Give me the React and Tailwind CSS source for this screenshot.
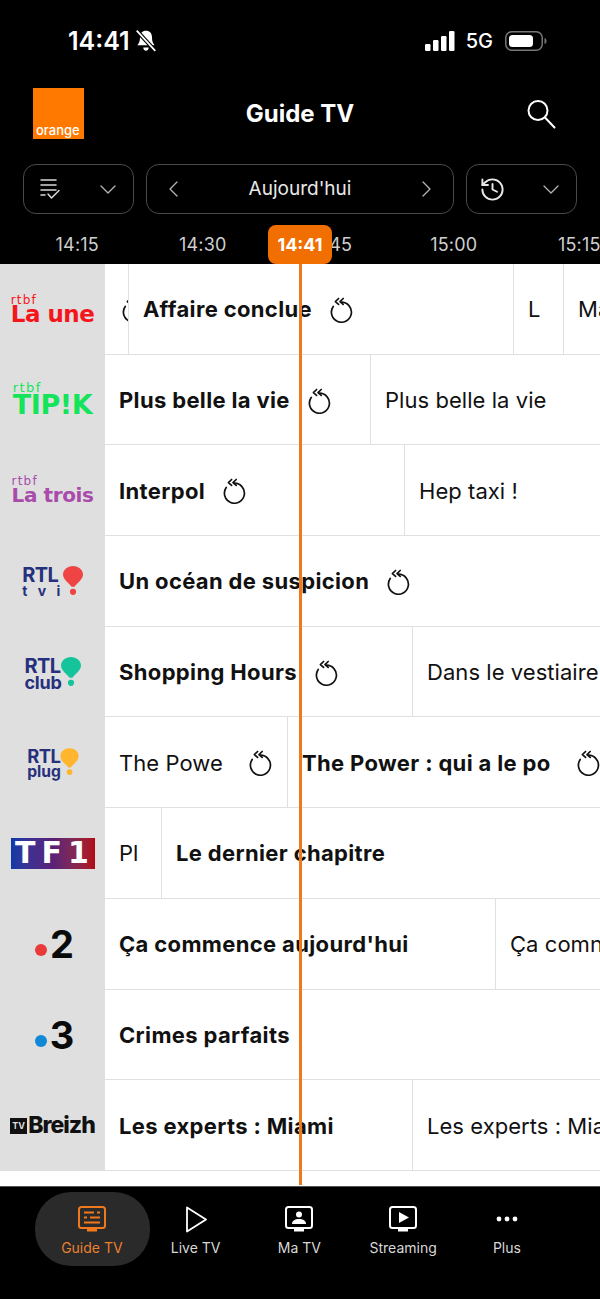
import React from 'react';
import { History } from 'lucide-react';

const ROWS = [
  { logo: 'laune', cells: [{ w: 24, replay: true, clip: true }, { w: 385, t: 'Affaire conclue', b: true, replay: true }, { w: 50, t: 'L' }, { t: 'Ma' }] },
  { logo: 'tipik', cells: [{ w: 266, t: 'Plus belle la vie', b: true, replay: true }, { t: 'Plus belle la vie' }] },
  { logo: 'latrois', cells: [{ w: 300, t: 'Interpol', b: true, replay: true }, { t: 'Hep taxi !' }] },
  { logo: 'rtltvi', cells: [{ t: 'Un océan de suspicion', b: true, replay: true }] },
  { logo: 'rtlclub', cells: [{ w: 308, t: 'Shopping Hours', b: true, replay: true }, { t: 'Dans le vestiaire' }] },
  { logo: 'rtlplug', cells: [{ w: 183, t: 'The Powe', replay: true, wide: true }, { t: 'The Power : qui a le po', b: true, replay: true, wide: true }] },
  { logo: 'tf1', cells: [{ w: 57, t: 'Pl' }, { t: 'Le dernier chapitre', b: true }] },
  { logo: 'f2', cells: [{ w: 391, t: "Ça commence aujourd'hui", b: true }, { t: 'Ça comn' }] },
  { logo: 'f3', cells: [{ t: 'Crimes parfaits', b: true }] },
  { logo: 'breizh', cells: [{ w: 308, t: 'Les experts : Miami', b: true }, { t: 'Les experts : Mia' }] },
];

const NAV = [
  { label: 'Guide TV', icon: 'guide', active: true },
  { label: 'Live TV', icon: 'live' },
  { label: 'Ma TV', icon: 'ma' },
  { label: 'Streaming', icon: 'stream' },
  { label: 'Plus', icon: 'plus' },
];

function Replay() {
  return (
    <svg width="24" height="26" viewBox="0 0 24 26" fill="none" stroke="#111" strokeWidth="1.7" strokeLinecap="round" strokeLinejoin="round" className="shrink-0">
      <path d="M11 5.2 A10 10 0 1 1 3.2 9.5" />
      <path d="M8.600 1.500 L5.400 4.600 L8.600 7.400" />
      <path d="M13.200 1.500 L10 4.600 L13.200 7.400" />
    </svg>
  );
}

function Chevron({ dir = 'down', className }) {
  const d = { down: 'M1 1l7 7 7-7', left: 'M8 1L1 8l7 7', right: 'M1 1l7 7-7 7' }[dir];
  const size = dir === 'down' ? { w: 16, h: 9, vb: '0 0 16 9' } : { w: 9, h: 16, vb: '0 0 9 16' };
  return (
    <svg width={size.w} height={size.h} viewBox={size.vb} fill="none" stroke="#b5b5b5" strokeWidth="1.3" strokeLinecap="round" strokeLinejoin="round" className={className}>
      <path d={d} />
    </svg>
  );
}

function Balloon({ color, className }) {
  return (
    <svg width="20" height="31" viewBox="0 0 22 32" className={className}>
      <path d="M11 0C17 0 22 4 22 9.5 22 15 15.500 19 12.500 23H9.500C6.500 19 0 15 0 9.500 0 4 5 0 11 0Z" fill={color} />
      <circle cx="11" cy="28.500" r="3.400" fill={color} />
    </svg>
  );
}

function Rtbf({ color, children, bigClass, smallClass }) {
  return (
    <div className="flex flex-col items-start leading-none" style={{ color }}>
      <span className={`font-normal leading-[10px] font-['DejaVu_Sans',sans-serif] ${smallClass}`}>rtbf</span>
      <span className={bigClass}>{children}</span>
    </div>
  );
}

function RtlLogo({ sub, color, subClass, scale = '' }) {
  return (
    <div className={`flex items-start ${scale}`}>
      <div className="flex flex-col items-start text-[#26307c] font-bold leading-none">
        <span className="text-[20px] leading-[20px] tracking-[-0.600px]">RTL</span>
        <span className={subClass}>{sub}</span>
      </div>
      <Balloon color={color} className="-ml-[1px]" />
    </div>
  );
}

function Logo({ name }) {
  if (name === 'laune')
    return <Rtbf color="#f5161c" smallClass="text-[12px] tracking-[1.200px]" bigClass="text-[23px] font-bold leading-[19px] tracking-[-0.500px] whitespace-nowrap font-['DejaVu_Sans',sans-serif]">La une</Rtbf>;
  if (name === 'tipik')
    return <Rtbf color="#14e45a" smallClass="text-[13px] tracking-[1.400px]" bigClass="text-[27px] font-bold leading-[24px] tracking-[-0.400px] font-['DejaVu_Sans',sans-serif]">TIP!K</Rtbf>;
  if (name === 'latrois')
    return <Rtbf color="#a94bab" smallClass="text-[12px] tracking-[1.200px]" bigClass="text-[20px] font-bold leading-[19px] tracking-[-0.400px] whitespace-nowrap font-['DejaVu_Sans',sans-serif]">La trois</Rtbf>;
  if (name === 'rtltvi')
    return <RtlLogo sub="t v i" color="#ee4444" subClass="text-[14px] leading-[12px] tracking-[3.500px]" />;
  if (name === 'rtlclub')
    return <RtlLogo sub="club" color="#16c49b" subClass="text-[18px] leading-[13px] tracking-[-0.200px]" />;
  if (name === 'rtlplug')
    return <RtlLogo sub="plug" color="#ffb52e" subClass="text-[17px] leading-[13px]" scale="scale-[0.92]" />;
  if (name === 'tf1')
    return (
      <div className="w-[84px] h-[31px] bg-linear-to-r from-[#0a3aa8] via-[#5a1f78] to-[#b3060f] flex items-center justify-center text-white font-black text-[30px] leading-none tracking-[6px] pl-[5px] font-['DejaVu_Sans',sans-serif]">
        TF1
      </div>
    );
  if (name === 'f2' || name === 'f3')
    return (
      <div className="flex items-end ml-[4px]">
        <span className={`w-[12px] h-[12px] rounded-full mb-[6px] mr-[3px] ${name === 'f2' ? 'bg-[#e93a3a]' : 'bg-[#1088d8]'}`} />
        <span className="text-[38px] leading-[36px] font-bold text-[#0a0a0a]">{name === 'f2' ? '2' : '3'}</span>
      </div>
    );
  return (
    <div className="flex items-center text-[#111]">
      <span className="w-[17px] h-[16px] bg-[#111] text-[#dfdfdf] text-[9px] font-bold flex items-center justify-center leading-none">TV</span>
      <span className="text-[23px] font-extrabold leading-none tracking-[-1px] ml-[1px]">Breizh</span>
    </div>
  );
}

function Cell({ cell }) {
  const width = cell.w ? 'shrink-0 border-r border-[#e0e0e0]' : 'flex-1 min-w-0';
  return (
    <div
      className={`${width} h-full flex items-center pl-[14px] pt-[2px] overflow-hidden whitespace-nowrap text-[22px] text-[#111] ${cell.b ? 'font-bold' : 'font-normal'}`}
      style={cell.w ? { width: cell.w } : undefined}
    >
      {cell.t && <span className={cell.b ? 'tracking-[0.350px]' : 'tracking-[0.050px]'}>{cell.t}</span>}
      {cell.replay && (
        <span className={cell.clip ? 'ml-[3px]' : cell.wide ? 'ml-[26px]' : 'ml-[18px]'}>
          <Replay />
        </span>
      )}
    </div>
  );
}

function NavIcon({ name, color }) {
  const screen = (
    <>
      <rect x="2" y="1" width="26" height="21" rx="2.500" fill="none" stroke={color} strokeWidth="2" />
      <rect x="10" y="22" width="10" height="3.500" fill={color} />
    </>
  );
  if (name === 'live')
    return (
      <svg width="30" height="27" viewBox="0 0 30 27" fill="none" stroke={color} strokeWidth="1.800" strokeLinejoin="round">
        <path d="M6 1.500 L25 13.500 L6 25.500 Z" />
      </svg>
    );
  if (name === 'plus')
    return (
      <svg width="30" height="27" viewBox="0 0 30 27" fill={color}>
        <circle cx="7" cy="13" r="2.400" />
        <circle cx="15" cy="13" r="2.400" />
        <circle cx="23" cy="13" r="2.400" />
      </svg>
    );
  return (
    <svg width="30" height="27" viewBox="0 0 30 27">
      {screen}
      {name === 'guide' && (
        <g stroke={color} strokeWidth="1.800">
          <path d="M7 6.500h10M20 6.500h3M7 11.500h3M13 11.500h10M7 16.500h16" />
        </g>
      )}
      {name === 'ma' && (
        <g fill={color}>
          <circle cx="15" cy="8.500" r="3" />
          <path d="M8 18c0-3.500 3-5 7-5s7 1.500 7 5z" />
        </g>
      )}
      {name === 'stream' && <path d="M11 6 L21 11.500 L11 17 Z" fill={color} />}
    </svg>
  );
}

export default function App() {
  return (
    <div className="relative w-[600px] h-[1299px] bg-black overflow-hidden font-['Inter',sans-serif]">
      {/* Status bar */}
      <div className="h-[88px] flex items-start justify-between pt-[26px] pl-[68px] pr-[53px] text-white">
        <div className="flex items-center gap-[5px]">
          <span className="text-[25px] leading-[30px] font-semibold">14:41</span>
          <svg width="22" height="24" viewBox="0 0 20 22" fill="#fff">
            <path d="M10 1.500c3.500 0 5.500 2.500 5.500 6 0 4 1 5.500 2.500 7.500H2c1.500-2 2.500-3.500 2.500-7.500 0-3.500 2-6 5.500-6z" />
            <path d="M7.500 17h5c0 1.500-1 3-2.500 3s-2.500-1.500-2.500-3z" />
            <path d="M1.500 1.500 L18.500 20" stroke="#000" strokeWidth="3.600" />
            <path d="M1.500 1.500 L18.500 20" stroke="#fff" strokeWidth="1.600" />
          </svg>
        </div>
        <div className="flex items-center h-[30px]">
          <svg width="30" height="20" viewBox="0 0 30 20" fill="#fff">
            <rect x="0" y="13" width="5.500" height="7" rx="1.200" />
            <rect x="8" y="9" width="5.500" height="11" rx="1.200" />
            <rect x="16" y="5" width="5.500" height="15" rx="1.200" />
            <rect x="24" y="0" width="5.500" height="20" rx="1.200" />
          </svg>
          <span className="ml-[11px] text-[20px] font-medium">5G</span>
          <svg width="42" height="20" viewBox="0 0 42 20" className="ml-[12px]">
            <rect x="0.750" y="0.750" width="36.500" height="18.500" rx="6" fill="none" stroke="#777" strokeWidth="1.500" />
            <rect x="4" y="4" width="24" height="12" rx="3.500" fill="#fff" />
            <path d="M39.500 7c1.500.5 2 1.500 2 3s-.5 2.500-2 3z" fill="#777" />
          </svg>
        </div>
      </div>

      {/* Header */}
      <div className="h-[51px] flex items-center justify-between pl-[33px] pr-[44px]">
        <div className="w-[51px] h-[51px] bg-[#ff7900] flex items-end pl-[3px] pb-[2px]">
          <span className="text-[13px] leading-[14px] font-medium text-white">orange</span>
        </div>
        <span className="text-[24px] font-bold text-white mr-[10px]">Guide TV</span>
        <svg width="30" height="30" viewBox="0 0 30 30" fill="none" stroke="#fff" strokeWidth="2" strokeLinecap="round">
          <circle cx="12" cy="11.500" r="9.500" />
          <path d="M19 18.500 L28.500 28.500" />
        </svg>
      </div>

      {/* Filters */}
      <div className="mt-[25px] mx-[23px] h-[50px] flex gap-[12px]">
        <div className="w-[111px] rounded-[13px] border border-[#4a4a4a] flex items-center justify-between pl-[16px] pr-[17px]">
          <svg width="20" height="22" viewBox="0 0 20 22" fill="none" stroke="#d8d8d8" strokeWidth="1.500" strokeLinecap="round" strokeLinejoin="round">
            <path d="M1 2h15M1 7h15M1 12h15M1 17h4M8 16l3.500 4L19 12.500" />
          </svg>
          <Chevron />
        </div>
        <div className="flex-1 rounded-[13px] border border-[#4a4a4a] flex items-center justify-between px-[22px]">
          <Chevron dir="left" />
          <span className="text-[19px] text-[#e8e8e8]">Aujourd'hui</span>
          <Chevron dir="right" />
        </div>
        <div className="w-[111px] rounded-[13px] border border-[#4a4a4a] flex items-center justify-between pl-[12px] pr-[17px]">
          <History size={27} strokeWidth={1.7} color="#e8e8e8" />
          <Chevron />
        </div>
      </div>

      {/* Time axis */}
      <div className="relative h-[39px] mt-[11px]">
        <div className="flex h-full items-center pl-[14.500px] text-[18px] tracking-[0.200px] text-[#cfcfcf] whitespace-nowrap">
          {['14:15', '14:30', '14:45', '15:00', '15:15'].map((time) => (
            <span key={time} className="w-[125.500px] shrink-0 text-center">{time}</span>
          ))}
        </div>
        <div className="absolute left-[268px] top-0 w-[64px] h-[39px] rounded-[8px] bg-[#f16e00] flex items-center justify-center text-[18px] font-bold text-white">
          14:41
        </div>
      </div>

      {/* Grid */}
      <div className="bg-white pb-[15px]">
        {ROWS.map((row) => (
          <div key={row.logo} className="h-[90.700px] flex">
            <div className="w-[105px] shrink-0 h-full bg-[#dfdfdf] flex items-center justify-center overflow-hidden">
              <Logo name={row.logo} />
            </div>
            <div className="flex-1 min-w-0 flex border-b border-[#e0e0e0]">
              {row.cells.map((cell, i) => (
                <Cell key={i} cell={cell} />
              ))}
            </div>
          </div>
        ))}
      </div>

      {/* Now line */}
      <div className="absolute left-[298.500px] top-[264px] w-[3px] h-[921px] bg-[#ee7a1c]" />

      {/* Bottom nav */}
      <div className="h-[114px] border-t border-[#555] flex pl-[40px] pt-[5px]">
        {NAV.map((item) => (
          <div key={item.label} className="relative w-[103.750px] h-[74px] flex flex-col items-center">
            {item.active && <div className="absolute -left-[5px] top-0 w-[115px] h-[74px] rounded-[36px] bg-[#2a2a2a]" />}
            <div className="relative mt-[14px] h-[27px]">
              <NavIcon name={item.icon} color={item.active ? '#f0791e' : '#ffffff'} />
            </div>
            <span className={`relative mt-[6px] text-[14px] leading-[18px] ${item.active ? 'text-[#e98030]' : 'text-[#d8d8d8]'}`}>
              {item.label}
            </span>
          </div>
        ))}
      </div>
    </div>
  );
}
